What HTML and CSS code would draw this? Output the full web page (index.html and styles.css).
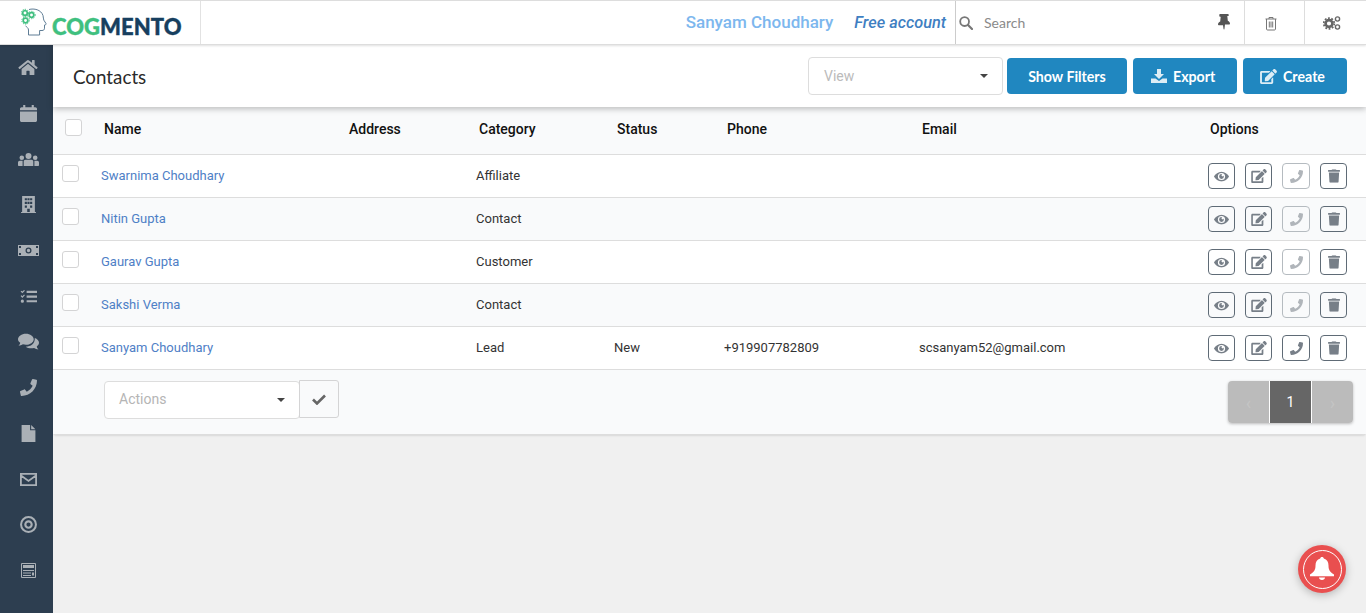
FILE: index.html
```html
<!DOCTYPE html>
<html lang="en">
<head>
<meta charset="utf-8">
<title>Contacts - Cogmento</title>
<link rel="stylesheet" href="styles.css">
</head>
<body>
<svg class="defs" width="0" height="0" aria-hidden="true">
  <symbol id="i-eye" viewBox="0 0 20 14"><path fill="currentColor" fill-rule="evenodd" d="M10 0.5C5.500 0.5 2 3.600 0.300 6.300a1.300 1.300 0 0 0 0 1.400C2 10.400 5.500 13.500 10 13.500s8-3.100 9.700-5.800a1.300 1.300 0 0 0 0-1.400C18 3.600 14.500 0.500 10 0.500zM10 11.800a4.800 4.800 0 1 1 0-9.600 4.800 4.800 0 0 1 0 9.600zM10 3.800a3.200 3.200 0 1 0 3.200 3.200c0-.5-.1-.9-.3-1.300a1.400 1.400 0 1 1-1.900-1.700 3.200 3.200 0 0 0-1-.2z"/></symbol>
  <symbol id="i-edit" viewBox="0 0 576 512"><path fill="currentColor" d="M402.600 83.200l90.200 90.200c3.800 3.800 3.800 10 0 13.800L274.400 405.600l-92.800 10.300c-12.400 1.400-22.900-9.100-21.500-21.500l10.300-92.800L388.800 83.200c3.800-3.800 10-3.800 13.800 0zm162-22.900l-48.800-48.800c-15.200-15.200-39.900-15.200-55.200 0l-35.400 35.400c-3.800 3.800-3.800 10 0 13.800l90.200 90.200c3.800 3.800 10 3.800 13.800 0l35.400-35.400c15.200-15.300 15.200-40 0-55.200zM384 346.200V448H64V128h229.800c3.200 0 6.200-1.300 8.500-3.500l40-40c7.600-7.600 2.200-20.500-8.500-20.500H48C21.500 64 0 85.500 0 112v352c0 26.500 21.500 48 48 48h352c26.500 0 48-21.500 48-48V306.200c0-10.700-12.900-16-20.500-8.500l-40 40c-2.200 2.300-3.500 5.300-3.500 8.500z"/></symbol>
  <symbol id="i-phone" viewBox="0 0 512 512"><path fill="currentColor" d="M493.400 24.600l-104-24c-11.300-2.600-22.900 3.300-27.500 13.900l-48 112c-4.200 9.800-1.400 21.300 6.900 28l60.600 49.600c-36 76.700-98.900 140.500-177.200 177.200l-49.600-60.600c-6.800-8.300-18.200-11.100-28-6.900l-112 48C3.900 366.500-2 378.100.6 389.400l24 104C27.100 504.200 36.700 512 48 512c256.100 0 464-207.500 464-464 0-11.200-7.700-20.900-18.600-23.400z"/></symbol>
  <symbol id="i-trash" viewBox="0 0 448 512"><path fill="currentColor" d="M432 32H312l-9.400-18.700A24 24 0 0 0 281.100 0H166.800a23.720 23.720 0 0 0-21.400 13.300L136 32H16A16 16 0 0 0 0 48v32a16 16 0 0 0 16 16h416a16 16 0 0 0 16-16V48a16 16 0 0 0-16-16zM53.200 467a48 48 0 0 0 47.900 45h245.800a48 48 0 0 0 47.900-45L416 128H32z"/></symbol>
</svg>

<header class="topbar">
  <div class="logo-cell">
    <svg class="logo-mark" viewBox="0 0 26 28" aria-hidden="true">
      <path fill="none" stroke="#5f7d95" stroke-width="1" d="M8 1.500C13 .2 20 1.500 22 7.500c.6 2 .2 3.400.8 4.600l2.300 3.600c.3.600-.2 1-1.600 1.300v3.200c0 1.600-1 2.300-2.500 2.300h-2.400v4.500H7.500v-5c0-2.300-2-2.700-3-4.300"/>
      <g fill="none" stroke="#3fbf7f" stroke-width="1.700"><circle cx="4" cy="5" r="2.300"/><circle cx="10.500" cy="7" r="2.300"/><circle cx="4.500" cy="12.500" r="2.300"/></g>
      <g fill="none" stroke="#3fbf7f" stroke-width="1" stroke-dasharray="1.200 1.200"><circle cx="4" cy="5" r="3.700"/><circle cx="10.500" cy="7" r="3.700"/><circle cx="4.500" cy="12.500" r="3.700"/></g>
    </svg>
    <span class="logo-text"><span class="logo-green">COG</span><span class="logo-navy">MENTO</span></span>
  </div>
  <div class="user-block">
    <span class="user-name">Sanyam Choudhary</span>
    <span class="account">Free account</span>
  </div>
  <div class="search-cell">
    <svg class="search-icon" viewBox="0 0 14 14" aria-hidden="true"><circle cx="5.600" cy="5.600" r="4.400" fill="none" stroke="currentColor" stroke-width="1.800"/><path d="M9 9l4 4" stroke="currentColor" stroke-width="2.200" stroke-linecap="round"/></svg>
    <span class="search-text">Search</span>
    <svg class="pin-icon" viewBox="0 0 12 16" aria-hidden="true"><path fill="currentColor" d="M2 0h8c.4 0 .7.300.7.700v.7c0 .4-.3.700-.7.700H9.300l.5 4.700c1.300.6 2.200 1.800 2.200 3 0 .4-.3.700-.7.700H7l-.6 4.800c0 .2-.7.200-.8 0L5 11.200H.7c-.4 0-.7-.3-.7-.7 0-1.200.900-2.400 2.200-3l.5-4.700H2c-.4 0-.7-.3-.7-.7V.7C1.300.3 1.600 0 2 0z"/></svg>
  </div>
  <div class="tool-cell tool-trash">
    <svg class="outline-trash" viewBox="0 0 12 14" aria-hidden="true"><path fill="none" stroke="currentColor" d="M.5 2.500h11M4 2.500V1h4v1.500M1.500 2.500v10c0 .6.400 1 1 1h7c.6 0 1-.4 1-1v-10M4.300 5v6M6 5v6M7.700 5v6"/></svg>
  </div>
  <div class="tool-cell tool-gear">
    <svg class="gears" viewBox="0 0 18 14" aria-hidden="true">
      <circle cx="6" cy="7.500" r="3.400" fill="none" stroke="currentColor" stroke-width="2.600"/>
      <circle cx="6" cy="7.500" r="5.300" fill="none" stroke="currentColor" stroke-width="1.800" stroke-dasharray="1.800 1.530"/>
      <circle cx="14.500" cy="3" r="2.100" fill="none" stroke="currentColor" stroke-width="1.400"/>
      <circle cx="14.500" cy="11" r="2.100" fill="none" stroke="currentColor" stroke-width="1.400"/>
    </svg>
  </div>
</header>

<div class="shell">
  <nav class="sidebar">
    <a class="nav-item"><svg class="nav-home" viewBox="0 0 576 512"><path fill="currentColor" d="M280.370 148.260L96 300.110V464a16 16 0 0 0 16 16l112.060-.29a16 16 0 0 0 15.920-16V368a16 16 0 0 1 16-16h64a16 16 0 0 1 16 16v95.640a16 16 0 0 0 16 16.050L464 480a16 16 0 0 0 16-16V300L295.670 148.260a12.190 12.190 0 0 0-15.300 0zM571.600 251.470L488 182.560V44.050a12 12 0 0 0-12-12h-56a12 12 0 0 0-12 12v72.610L318.470 43a48 48 0 0 0-61 0L4.340 251.470a12 12 0 0 0-1.600 16.900l25.500 31A12 12 0 0 0 45.150 301l235.220-193.740a12.190 12.190 0 0 1 15.300 0L530.900 301a12 12 0 0 0 16.900-1.600l25.500-31a12 12 0 0 0-1.700-16.930z"/></svg></a>
    <a class="nav-item"><svg viewBox="0 0 16 16"><path fill="currentColor" d="M3 0h2v2h6V0h2v2h1.500C15.300 2 16 2.700 16 3.500V5H0V3.500C0 2.700.7 2 1.500 2H3zM0 6h16v8.500c0 .8-.7 1.500-1.500 1.500h-13C.7 16 0 15.300 0 14.500z"/></svg></a>
    <a class="nav-item"><svg class="nav-wide" viewBox="0 0 21 15"><path fill="currentColor" d="M10.500 1a3 3 0 1 1 0 6 3 3 0 0 1 0-6zM3.800 3.500a2.300 2.300 0 1 1 0 4.600 2.300 2.300 0 0 1 0-4.600zM17.200 3.500a2.300 2.300 0 1 1 0 4.600 2.300 2.300 0 0 1 0-4.600zM7.500 7.800h6c1 0 1.800.8 1.800 1.800V14H5.700V9.600c0-1 .8-1.800 1.800-1.800zM0 10.500C0 9.500.8 8.800 1.800 8.800H4.600v5.200H1c-.6 0-1-.4-1-1zM16.400 8.800h2.800c1 0 1.800.7 1.800 1.700V13c0 .6-.4 1-1 1h-3.600z"/></svg></a>
    <a class="nav-item"><svg viewBox="0 0 14 16"><path fill="currentColor" fill-rule="evenodd" d="M1 0h12v15h1v1H0v-1h1zM3.500 2v2h2V2zM6 2v2h2V2zM8.500 2v2h2V2zM3.500 5.500v2h2v-2zM6 5.500v2h2v-2zM8.500 5.500v2h2v-2zM3.500 9v2h2V9zM8.500 9v2h2V9zM5.800 12v3h2.400v-3z"/></svg></a>
    <a class="nav-item"><svg class="nav-wide" viewBox="0 0 21 11"><path fill="currentColor" fill-rule="evenodd" d="M0 0h21v11H0zM1 1v2h2V1zM18 1v2h2V1zM1 8v2h2V8zM18 8v2h2V8zM10.500 2.500a3 3 0 1 0 0 6 3 3 0 0 0 0-6zM10.500 3.800a1.700 1.700 0 1 1 0 3.400 1.700 1.700 0 0 1 0-3.400z"/></svg></a>
    <a class="nav-item"><svg viewBox="0 0 18 14"><path fill="currentColor" d="M7 1h11v2.200H7zM7 6h11v2.200H7zM7 11h11v2.200H7zM.6 1.600l.9-.8 1 1L4.300 0l.9.8-2.700 2.700zM.6 6.600l.9-.8 1 1L4.300 5l.9.8-2.700 2.700zM2.500 10.300a1.700 1.700 0 1 1 0 3.400 1.700 1.700 0 0 1 0-3.400z"/></svg></a>
    <a class="nav-item"><svg class="nav-wide" viewBox="0 0 20 15"><path fill="currentColor" d="M7.500 0C11.600 0 15 2.400 15 5.300s-3.400 5.300-7.500 5.300c-1 0-1.900-.1-2.800-.4C3.500 11 2 11.600.5 11.600c1-1 1.500-2 1.600-2.900C.8 7.800 0 6.600 0 5.300 0 2.400 3.400 0 7.500 0zM16 4.200c2.300.8 4 2.600 4 4.600 0 1.300-.8 2.500-2.100 3.400.1.900.6 1.900 1.600 2.800-1.500 0-3-.6-4.200-1.400-.9.300-1.800.4-2.800.4-2 0-3.800-.6-5.100-1.600 4.700 0 8.900-2.800 8.600-8.200z"/></svg></a>
    <a class="nav-item"><svg viewBox="0 0 512 512"><use href="#i-phone"/></svg></a>
    <a class="nav-item"><svg viewBox="0 0 13 16"><path fill="currentColor" d="M0 0h8v5h5v11H0zM9 0l4 4H9z"/></svg></a>
    <a class="nav-item"><svg viewBox="0 0 17 13"><path fill="none" stroke="currentColor" stroke-width="1.800" d="M.9.900h15.200v11.200H.9zM1 2.500l7.500 5.500L16 2.500"/></svg></a>
    <a class="nav-item"><svg viewBox="0 0 16 16"><circle cx="8" cy="8" r="7" fill="none" stroke="currentColor" stroke-width="1.900"/><circle cx="8" cy="8" r="3" fill="none" stroke="currentColor" stroke-width="2"/></svg></a>
    <a class="nav-item"><svg class="nav-small" viewBox="0 0 15 15"><path fill="none" stroke="currentColor" d="M.5.500h14v14H.5z"/><path fill="currentColor" d="M2 2h11v3H2zM2 7h11v1H2zM2 9.500h8v1H2zM11 9.500h2v3h-2zM2 12h8v1H2z"/></svg></a>
  </nav>

  <main class="content">
    <div class="page-head">
      <h1 class="page-title">Contacts</h1>
      <div class="head-actions">
        <div class="select select-view"><span>View</span><i class="caret"></i></div>
        <a class="btn btn-filters">Show Filters</a>
        <a class="btn btn-export"><svg class="btn-icon" viewBox="0 0 16 14" aria-hidden="true"><path fill="currentColor" d="M6 0h4v5h3L8 10 3 5h3zM0 9.500h4.500L8 12l3.500-2.500H16V14H0z"/></svg>Export</a>
        <a class="btn btn-create"><svg class="btn-icon" viewBox="0 0 576 512" aria-hidden="true"><use href="#i-edit"/></svg>Create</a>
      </div>
    </div>

    <section class="card">
      <div class="row row-head">
        <span class="check check-head"></span>
        <span>Name</span><span>Address</span><span>Category</span><span>Status</span><span>Phone</span><span>Email</span><span class="opt-title">Options</span>
      </div>

      <div class="row">
        <span class="check"></span><a class="name">Swarnima Choudhary</a><span></span><span>Affiliate</span><span></span><span></span><span></span>
        <div class="ops"><a class="op"><svg class="op-eye" viewBox="0 0 20 14"><use href="#i-eye"/></svg></a><a class="op"><svg class="op-edit" viewBox="0 0 576 512"><use href="#i-edit"/></svg></a><a class="op op-off"><svg class="op-ph" viewBox="0 0 512 512"><use href="#i-phone"/></svg></a><a class="op"><svg class="op-tr" viewBox="0 0 448 512"><use href="#i-trash"/></svg></a></div>
      </div>
      <div class="row row-alt">
        <span class="check"></span><a class="name">Nitin Gupta</a><span></span><span>Contact</span><span></span><span></span><span></span>
        <div class="ops"><a class="op"><svg class="op-eye" viewBox="0 0 20 14"><use href="#i-eye"/></svg></a><a class="op"><svg class="op-edit" viewBox="0 0 576 512"><use href="#i-edit"/></svg></a><a class="op op-off"><svg class="op-ph" viewBox="0 0 512 512"><use href="#i-phone"/></svg></a><a class="op"><svg class="op-tr" viewBox="0 0 448 512"><use href="#i-trash"/></svg></a></div>
      </div>
      <div class="row">
        <span class="check"></span><a class="name">Gaurav Gupta</a><span></span><span>Customer</span><span></span><span></span><span></span>
        <div class="ops"><a class="op"><svg class="op-eye" viewBox="0 0 20 14"><use href="#i-eye"/></svg></a><a class="op"><svg class="op-edit" viewBox="0 0 576 512"><use href="#i-edit"/></svg></a><a class="op op-off"><svg class="op-ph" viewBox="0 0 512 512"><use href="#i-phone"/></svg></a><a class="op"><svg class="op-tr" viewBox="0 0 448 512"><use href="#i-trash"/></svg></a></div>
      </div>
      <div class="row row-alt">
        <span class="check"></span><a class="name">Sakshi Verma</a><span></span><span>Contact</span><span></span><span></span><span></span>
        <div class="ops"><a class="op"><svg class="op-eye" viewBox="0 0 20 14"><use href="#i-eye"/></svg></a><a class="op"><svg class="op-edit" viewBox="0 0 576 512"><use href="#i-edit"/></svg></a><a class="op op-off"><svg class="op-ph" viewBox="0 0 512 512"><use href="#i-phone"/></svg></a><a class="op"><svg class="op-tr" viewBox="0 0 448 512"><use href="#i-trash"/></svg></a></div>
      </div>
      <div class="row">
        <span class="check"></span><a class="name">Sanyam Choudhary</a><span></span><span>Lead</span><span>New</span><span>+919907782809</span><span>scsanyam52@gmail.com</span>
        <div class="ops"><a class="op"><svg class="op-eye" viewBox="0 0 20 14"><use href="#i-eye"/></svg></a><a class="op"><svg class="op-edit" viewBox="0 0 576 512"><use href="#i-edit"/></svg></a><a class="op"><svg class="op-ph" viewBox="0 0 512 512"><use href="#i-phone"/></svg></a><a class="op"><svg class="op-tr" viewBox="0 0 448 512"><use href="#i-trash"/></svg></a></div>
      </div>

      <div class="card-foot">
        <div class="bulk">
          <div class="select select-actions"><span>Actions</span><i class="caret"></i></div>
          <a class="apply"><svg viewBox="0 0 14 11" aria-hidden="true"><path fill="none" stroke="currentColor" stroke-width="2.600" d="M1 5.500l4 4 8-8"/></svg></a>
        </div>
        <div class="pager">
          <a class="page page-off">‹</a>
          <a class="page page-on">1</a>
          <a class="page page-off">›</a>
        </div>
      </div>
    </section>
  </main>
</div>

<a class="bell">
  <span class="bell-ring">
    <svg viewBox="0 0 24 26" aria-hidden="true"><path fill="#fff" d="M12 1c1 0 1.800.7 1.800 1.600C17 3.500 18.500 6 18.500 9.500c0 4 1 6 5.500 9v1.700H0v-1.700c4.500-3 5.500-5 5.500-9 0-3.500 1.500-6 4.700-6.900C10.200 1.700 11 1 12 1zM9 21.500h6c0 1.400-1.300 2.500-3 2.500s-3-1.100-3-2.500z"/></svg>
  </span>
</a>
</body>
</html>
```

FILE: styles.css
```css
* { box-sizing: border-box; }
html, body { margin: 0; height: 100%; overflow: hidden; }
body {
  display: flex;
  flex-direction: column;
  background: #f0f0f0;
  font-family: Roboto, "Liberation Sans", sans-serif;
  font-size: 13px;
  color: #333;
}
.defs { position: absolute; }
svg { display: block; }

/* top bar */
.topbar {
  position: relative;
  z-index: 3;
  flex: none;
  display: flex;
  align-items: stretch;
  height: 45px;
  background: #fff;
  border-top: 1px solid #ddd;
  border-bottom: 1px solid #ddd;
  box-shadow: 0 1px 2px rgba(0,0,0,.12);
}
.logo-cell {
  display: flex;
  align-items: center;
  width: 201px;
  padding: 0 0 0 21px;
  border-right: 1px solid #e2e2e2;
}
.logo-mark { width: 26px; height: 28px; margin-top: -1px; flex: none; }
.logo-text {
  margin: 8px 0 0 5px;
  font-family: Lato, sans-serif;
  font-weight: 900;
  font-size: 22px;
  line-height: 1;
  letter-spacing: .05px;
  -webkit-text-stroke: .4px;
  white-space: nowrap;
}
.logo-green { color: #3fc07f; }
.logo-navy { color: #173f5f; }
.user-block {
  flex: 1;
  display: flex;
  align-items: center;
  justify-content: flex-end;
  gap: 21px;
  padding-right: 9px;
  white-space: nowrap;
}
.user-name { font-size: 17px; font-weight: 500; color: #7db7ee; margin-top: -1px; }
.account { font-size: 16.300px; font-weight: 500; font-style: italic; color: #3f7fc2; }
.search-cell {
  display: flex;
  align-items: center;
  width: 290px;
  padding: 0 14px 0 3px;
  border-left: 1px solid #ccc;
  border-right: 1px solid #ddd;
}
.search-icon { width: 14px; height: 14px; color: #777; flex: none; }
.search-text { margin-left: 11px; flex: 1; font-family: Lato, sans-serif; font-size: 14px; color: #8a8a8a; }
.pin-icon { width: 12px; height: 16px; color: #555; margin-top: -2px; }
.tool-cell { display: flex; align-items: center; justify-content: center; padding-right: 8px; }
.tool-trash { width: 60px; border-right: 1px solid #ddd; }
.tool-gear { width: 61px; }
.outline-trash { width: 12px; height: 15px; color: #777; margin-top: 2px; }
.gears { width: 18px; height: 14px; color: #666; margin-top: 1px; }

/* shell */
.shell { flex: 1; display: flex; min-height: 0; }
.sidebar {
  flex: none;
  width: 53px;
  display: flex;
  flex-direction: column;
  background: #2d3e50;
  color: #aab0b6;
  padding-left: 3px;
}
.nav-item {
  flex: none;
  height: 45.700px;
  display: flex;
  align-items: center;
  justify-content: center;
}
.nav-item svg { width: 17px; height: 17px; }
.nav-item .nav-home { width: 20px; }
.nav-item .nav-wide { width: 21px; }
.nav-item .nav-small { width: 15px; }
.content { flex: 1; min-width: 0; }

/* page head */
.page-head {
  position: relative;
  z-index: 2;
  display: flex;
  align-items: center;
  justify-content: space-between;
  height: 62px;
  padding: 0 19px 0 20px;
  background: #fff;
  box-shadow: 0 2px 6px rgba(0,0,0,.25);
}
.page-title { margin: 1px 0 0; font-family: Lato, sans-serif; font-size: 18.800px; font-weight: 400; color: #2a2a2a; }
.head-actions { display: flex; align-items: center; gap: 6px; }
.select {
  display: flex;
  align-items: center;
  justify-content: space-between;
  height: 38px;
  padding: 0 14px;
  background: #fff;
  border: 1px solid #ddd;
  border-radius: 4px;
  color: #bbb;
  font-size: 14px;
}
.select span { margin-top: -2px; }
.select-view { width: 195px; margin-right: -2px; padding: 0 14px 0 15px; }
.select-view span { margin-top: 0; }
.caret {
  width: 0;
  height: 0;
  border-left: 4px solid transparent;
  border-right: 4px solid transparent;
  border-top: 4px solid #444;
}
.btn {
  display: flex;
  align-items: center;
  justify-content: flex-start;
  height: 36px;
  padding: 0 0 0 18px;
  background: #2087c0;
  border-radius: 4px;
  color: #fff;
  font-family: Lato, sans-serif;
  font-size: 14.200px;
  font-weight: 700;
  white-space: nowrap;
}
.btn-filters { width: 120px; justify-content: center; padding: 0; }
.btn-export { width: 104px; }
.btn-create { width: 104px; padding-left: 17px; }
.btn-icon { width: 16px; height: 14px; margin-right: 6px; opacity: .85; }
.btn-create .btn-icon { width: 17px; height: 15px; }

/* table */
.card {
  background: #fff;
  border-bottom: 1px solid #ddd;
  border-radius: 0 0 4px 4px;
  box-shadow: 0 1px 2px rgba(0,0,0,.1);
}
.row {
  display: grid;
  grid-template-columns: 39px 245px 130px 138px 110px 195px 1fr auto;
  align-items: center;
  height: 43px;
  padding: 0 19px 0 9px;
  border-bottom: 1px solid #ddd;
  background: #fff;
}
.row > span, .row > .name { margin-top: -2px; }
.row-alt { background: #f9fafb; }
.row-head {
  height: 48px;
  padding: 1px 19px 4px 12px;
  background: #f9fafb;
  color: #111;
  font-size: 14px;
  font-weight: 500;
}
.row-head > span { margin-top: 0; }
.opt-title { width: 137px; }
.row > .check {
  display: block;
  width: 17px;
  height: 17px;
  margin-top: -6px;
  background: #fff;
  border: 1px solid #d4d4d5;
  border-radius: 3px;
}
.row > .check-head { margin-top: -3px; }
.name { color: #4f80c6; }
.ops { display: flex; gap: 10px; width: 139px; }
.op {
  display: flex;
  align-items: center;
  justify-content: center;
  width: 27px;
  height: 26px;
  border: 1px solid #5f6b76;
  border-radius: 4px;
  color: #777f88;
}
.op:nth-child(3) { width: 28px; }
.op-off { border-color: #b5bbc0; color: #b0b5ba; }
.op-eye { width: 15px; height: 11px; }
.op-edit { width: 16px; height: 14px; }
.op-ph { width: 13px; height: 13px; }
.op-tr { width: 12px; height: 14px; }

/* footer */
.card-foot {
  display: flex;
  justify-content: space-between;
  height: 64px;
  padding: 10px 13px 0 51px;
  background: #f9fafb;
}
.bulk { display: flex; align-items: flex-start; }
.select-actions {
  width: 196px;
  margin-top: 1px;
  padding: 0 14px 0 14px;
  color: #b5b5b5;
}
.apply {
  display: flex;
  align-items: center;
  justify-content: center;
  width: 40px;
  height: 38px;
  margin-left: -1px;
  border: 1px solid #d4d4d5;
  border-radius: 0 3px 3px 0;
  color: #666;
}
.apply svg { width: 14px; height: 11px; }
.pager {
  display: flex;
  align-self: flex-start;
  gap: 1px;
  height: 42px;
  margin-top: 1px;
  background: #fff;
  border-radius: 4px;
  box-shadow: 0 1px 3px rgba(0,0,0,.25);
  overflow: hidden;
}
.page {
  display: flex;
  align-items: center;
  justify-content: center;
  width: 41px;
  font-size: 14px;
  color: #fff;
}
.page-off { background: #bbb; color: #c4c4c4; font-size: 18px; }
.page-on { background: #666; }

/* notification bell */
.bell {
  position: fixed;
  right: 20px;
  bottom: 20px;
  display: flex;
  align-items: center;
  justify-content: center;
  width: 48px;
  height: 48px;
  background: #e94f4f;
  border-radius: 50%;
  box-shadow: 0 2px 8px rgba(0,0,0,.25);
}
.bell-ring {
  display: flex;
  align-items: center;
  justify-content: center;
  width: 39px;
  height: 39px;
  border: 1px solid #fff;
  border-radius: 50%;
}
.bell-ring svg { width: 24px; height: 26px; }
```
